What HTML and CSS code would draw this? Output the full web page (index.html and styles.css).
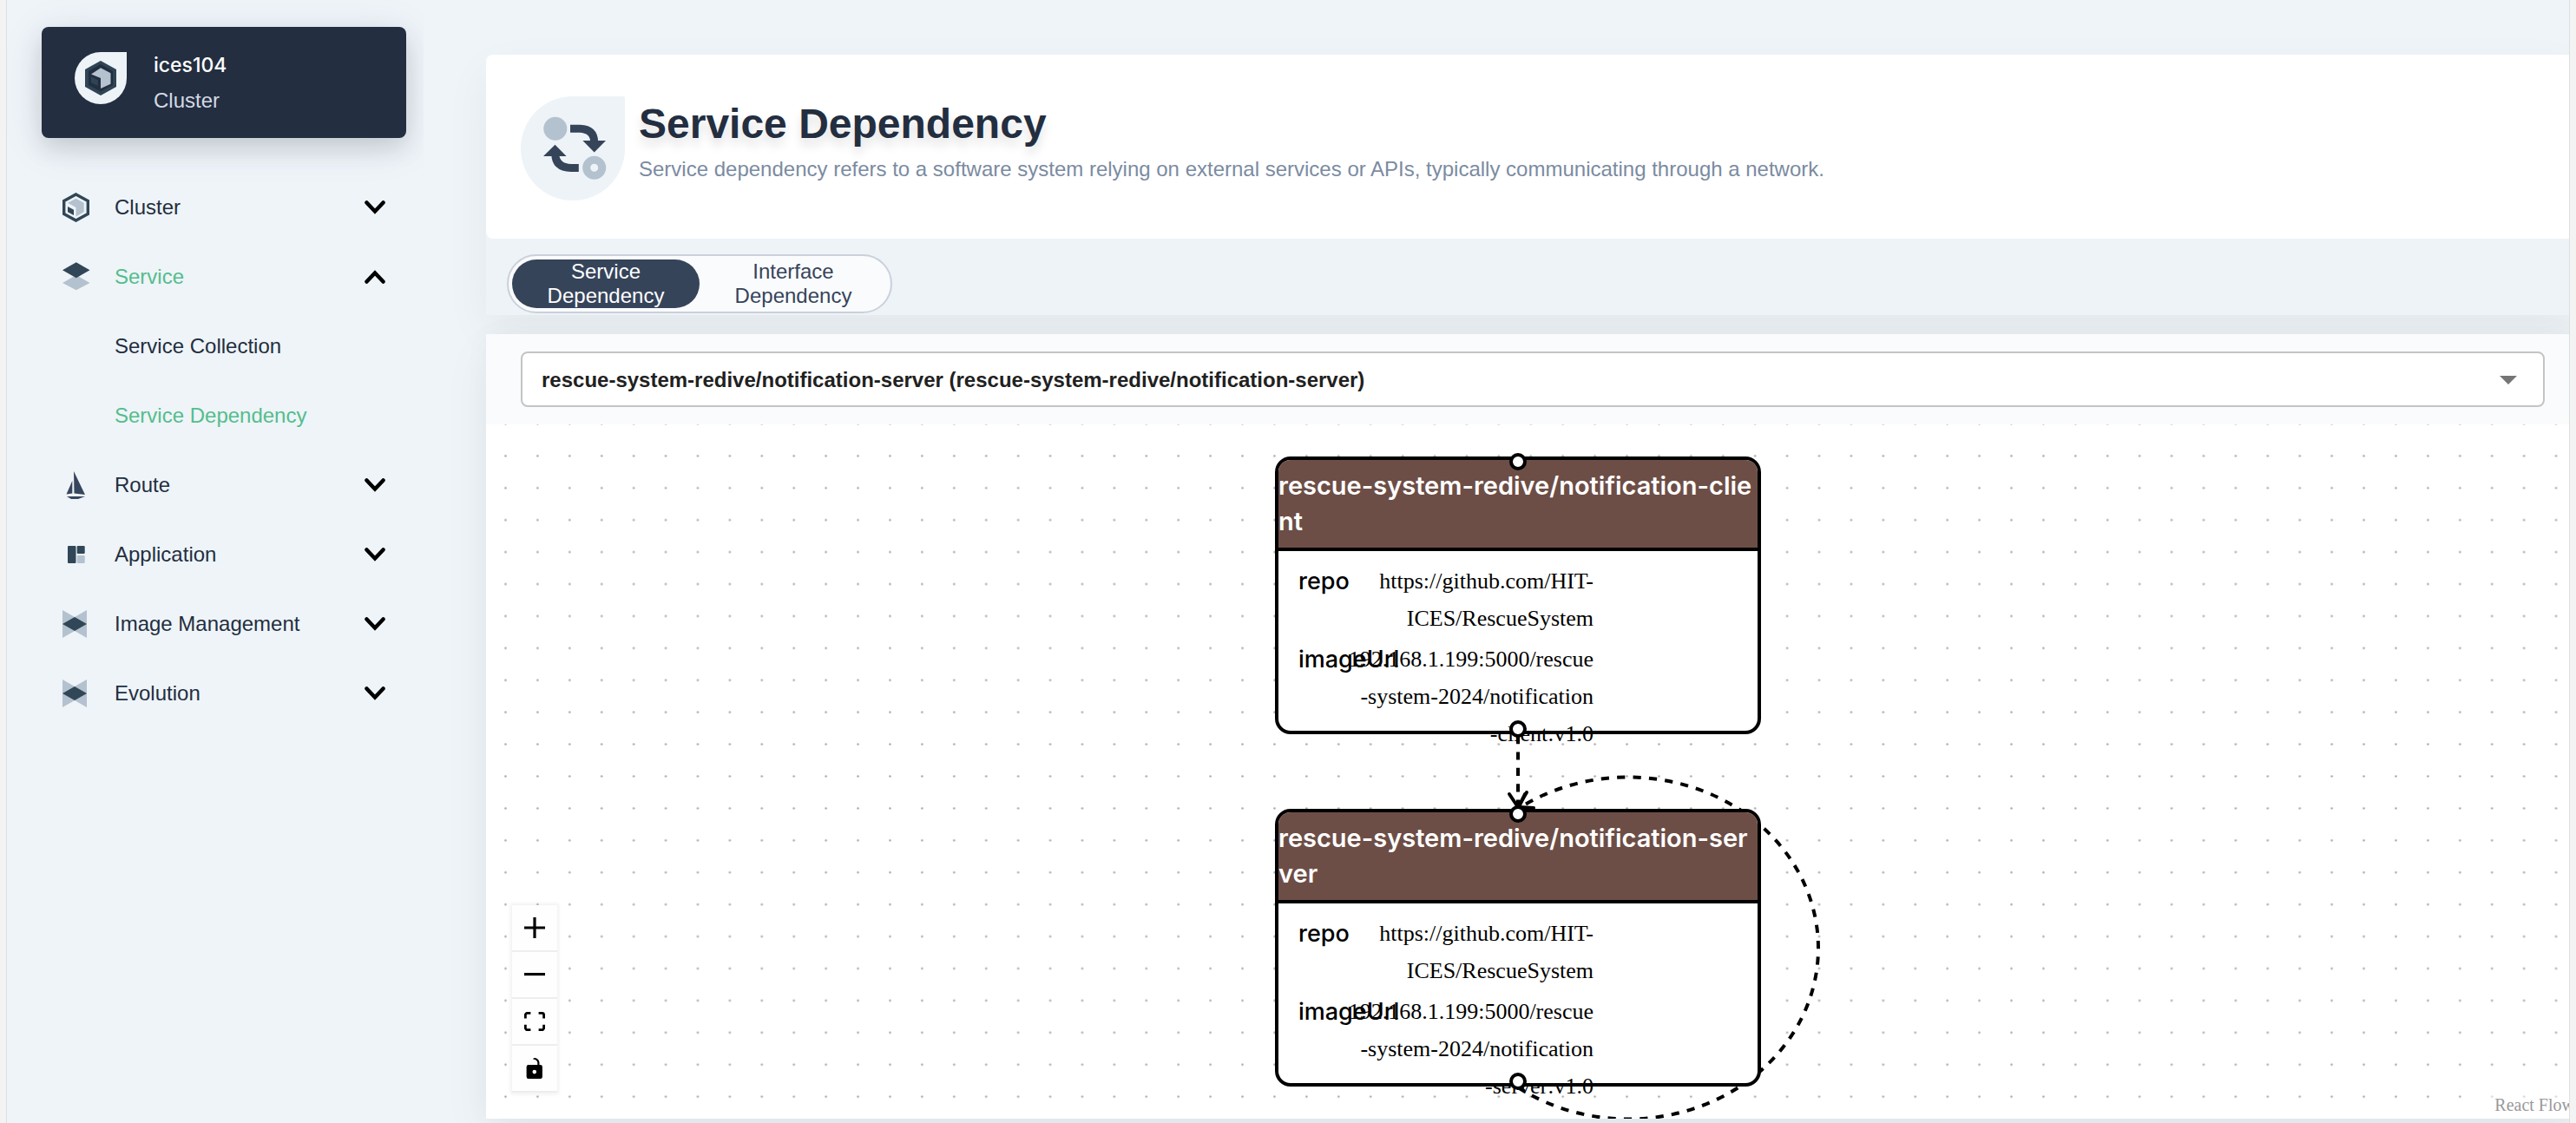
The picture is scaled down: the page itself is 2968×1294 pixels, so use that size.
FILE: index.html
```html
<!DOCTYPE html>
<html lang="en">
<head>
<meta charset="utf-8">
<meta name="viewport" content="width=device-width, initial-scale=1">
<title>Service Dependency</title>
<link rel="stylesheet" href="styles.css">
</head>
<body>
<svg class="sprite" aria-hidden="true">
  <symbol id="chevron" viewBox="0 0 24 16"><path d="M2.5 2.5 12 12.5 21.500 2.500" fill="none" stroke="#000" stroke-width="4.500" stroke-linecap="round"/></symbol>
  <symbol id="bowtie" viewBox="0 0 34 34"><path d="M0 1 14 9 28 1V33L14 25 0 33Z" fill="#b4c1ce"/><path d="M0 17 14 9 28 17 14 25Z" fill="#314656"/></symbol>
</svg>
<div class="app">
  <aside class="sidebar">
    <div class="cluster-card">
      <span class="drop drop-small">
        <svg width="36" height="40" viewBox="0 0 36 40" aria-hidden="true">
          <path d="M18 0 36 10V30L18 40 0 30V10Z" fill="#2f4454"/>
          <path d="M18 4 32 12V28L18 35.500 4 28V12Z" fill="#232e40"/>
          <path d="M7 15.500 18 8.300 29.500 14.300V26.700L18 32V20Z" fill="#b4c1ce"/>
          <path d="M7 18.300 14.900 22.300V29L7 25.300Z" fill="#2f4454"/>
        </svg>
      </span>
      <div class="cluster-text">
        <strong>ices104</strong>
        <span>Cluster</span>
      </div>
    </div>
    <nav class="menu" aria-label="Main">
      <button class="menu-item" type="button" aria-expanded="false">
        <svg class="menu-icon" viewBox="0 0 34 34" aria-hidden="true">
          <path d="M15.500 1.900 29.300 9.500V24.500L15.500 32.100 1.700 24.500V9.500Z" fill="none" stroke="#314656" stroke-width="3.400"/>
          <path d="M6 11.800 15.500 6.700 24.700 11.800V22.300L15.500 27.500V17Z" fill="#b4c1ce"/>
          <path d="M6 16 13 19.800V26L6 22.200Z" fill="#314656"/>
        </svg>
        <span class="menu-label">Cluster</span>
        <svg class="chevron" aria-hidden="true"><use href="#chevron"/></svg>
      </button>
      <button class="menu-item active" type="button" aria-expanded="true">
        <svg class="menu-icon" viewBox="0 0 34 34" aria-hidden="true">
          <path d="M0 24 15.800 15 31.500 24 15.800 32.300Z" fill="#b4c1ce"/>
          <path d="M0 9.300 15.800 .3 31.500 9.300 15.800 18.300Z" fill="#314656"/>
        </svg>
        <span class="menu-label">Service</span>
        <svg class="chevron up" aria-hidden="true"><use href="#chevron"/></svg>
      </button>
      <a class="menu-item sub" href="#collection">Service Collection</a>
      <a class="menu-item sub active" href="#dependency" aria-current="page">Service Dependency</a>
      <button class="menu-item" type="button" aria-expanded="false">
        <svg class="menu-icon" viewBox="0 0 34 34" aria-hidden="true">
          <path d="M13 1 26 28 13.500 26.600ZM11.300 12V26.600L4.500 27.600ZM5 30H26L18 33H10Z" fill="#36465d"/>
        </svg>
        <span class="menu-label">Route</span>
        <svg class="chevron" aria-hidden="true"><use href="#chevron"/></svg>
      </button>
      <button class="menu-item" type="button" aria-expanded="false">
        <svg class="menu-icon" viewBox="0 0 34 34" aria-hidden="true">
          <rect x="6" y="7" width="9.500" height="20" rx="1" fill="#314656"/>
          <rect x="16.700" y="7" width="9" height="9" rx="1" fill="#314656"/>
          <rect x="16.700" y="18" width="9" height="9" rx="1" fill="#b4c1ce"/>
        </svg>
        <span class="menu-label">Application</span>
        <svg class="chevron" aria-hidden="true"><use href="#chevron"/></svg>
      </button>
      <button class="menu-item" type="button" aria-expanded="false">
        <svg class="menu-icon" aria-hidden="true"><use href="#bowtie"/></svg>
        <span class="menu-label">Image Management</span>
        <svg class="chevron" aria-hidden="true"><use href="#chevron"/></svg>
      </button>
      <button class="menu-item" type="button" aria-expanded="false">
        <svg class="menu-icon" aria-hidden="true"><use href="#bowtie"/></svg>
        <span class="menu-label">Evolution</span>
        <svg class="chevron" aria-hidden="true"><use href="#chevron"/></svg>
      </button>
    </nav>
  </aside>

  <main class="main">
    <section class="top">
      <header class="page-header">
        <span class="drop drop-large">
          <svg width="120" height="120" viewBox="0 0 120 120" aria-hidden="true">
            <circle cx="39.800" cy="37.300" r="13.500" fill="#b4c1ce"/>
            <circle cx="84.700" cy="82.300" r="9" fill="none" stroke="#b4c1ce" stroke-width="9"/>
            <g fill="none" stroke="#36445a" stroke-width="9"><path d="M57 37.300H68Q84.700 38 84.700 53"/><path d="M66.800 82.500H58Q39.800 82 39.800 66"/></g>
            <path d="M71.400 51H98L84.700 64.500ZM26 69 39.500 55.700 52.600 69Z" fill="#36445a"/>
          </svg>
        </span>
        <div>
          <h1>Service Dependency</h1>
          <p>Service dependency refers to a software system relying on external services or APIs, typically communicating through a network.</p>
        </div>
      </header>
      <div class="tab-strip">
        <div class="tabs" role="tablist">
          <button class="tab selected" type="button" role="tab" aria-selected="true">Service Dependency</button>
          <button class="tab" type="button" role="tab" aria-selected="false">Interface Dependency</button>
        </div>
      </div>
    </section>

    <section class="graph-panel">
      <div class="picker">
        <select class="picker-select" aria-label="Service">
          <option>rescue-system-redive/notification-server (rescue-system-redive/notification-server)</option>
        </select>
        <svg class="picker-caret" viewBox="0 0 20 10" aria-hidden="true"><path d="M0 0H20L10 10Z" fill="#757575"/></svg>
      </div>
      <div class="flow">
        <svg class="flow-layer" aria-hidden="true">
          <defs>
            <pattern id="dots" x="4.050" y="17.900" width="36.915" height="36.915" patternUnits="userSpaceOnUse"><circle cx="18.450" cy="18.450" r="1.300" fill="#aaa"/></pattern>
          </defs>
          <rect width="100%" height="100%" fill="url(#dots)"/>
          <g fill="none" stroke="#000" stroke-width="4">
            <path d="M1189 359V441" stroke-dasharray="9.200"/>
            <path d="M1189 764A219 197 0 1 0 1189 443" stroke-dasharray="9.200"/>
            <path d="M1179 426 1189 441 1199 424" stroke-linecap="round"/>
            <path d="M1197 426 1190 441 1207 442" stroke-linecap="round"/>
          </g>
        </svg>
        <article class="node node-client">
          <i class="handle handle-top"></i>
          <h2>rescue-system-redive/notification-client</h2>
          <dl>
            <dt>repo</dt>
            <dd>https://github.com/HIT-<br>ICES/RescueSystem</dd>
            <dt>imageUrl</dt>
            <dd>192.168.1.199:5000/rescue<br>-system-2024/notification<br>-client:v1.0</dd>
          </dl>
          <i class="handle handle-bottom"></i>
        </article>
        <article class="node node-server">
          <i class="handle handle-top"></i>
          <h2>rescue-system-redive/notification-server</h2>
          <dl>
            <dt>repo</dt>
            <dd>https://github.com/HIT-<br>ICES/RescueSystem</dd>
            <dt>imageUrl</dt>
            <dd>192.168.1.199:5000/rescue<br>-system-2024/notification<br>-server:v1.0</dd>
          </dl>
          <i class="handle handle-bottom"></i>
        </article>
        <div class="controls">
          <button type="button" aria-label="Zoom in"><svg viewBox="0 0 32 32"><path d="M32 18.133H18.133V32h-4.266V18.133H0v-4.266h13.867V0h4.266v13.867H32z"/></svg></button>
          <button type="button" aria-label="Zoom out"><svg viewBox="0 0 32 5"><path d="M0 0h32v4.200H0z"/></svg></button>
          <button type="button" aria-label="Fit view"><svg viewBox="0 0 32 30"><path d="M3.692 4.630c0-.53.4-.938.939-.938h5.215V0H4.708C2.130 0 0 2.054 0 4.630v5.216h3.692V4.631zM27.354 0h-5.200v3.692h5.170c.53 0 .984.4.984.939v5.215H32V4.631A4.624 4.624 0 0027.354 0zm.954 24.830c0 .532-.4.940-.939.940h-5.215v3.768h5.215c2.577 0 4.631-2.130 4.631-4.707v-5.139h-3.692v5.139zm-23.677.940c-.531 0-.939-.4-.939-.940v-5.138H0v5.139c0 2.577 2.130 4.707 4.708 4.707h5.138V25.770H4.631z"/></svg></button>
          <button type="button" aria-label="Toggle interactivity"><svg viewBox="0 0 25 32"><path d="M21.333 10.667H19.810V7.619C19.810 3.429 16.380 0 12.190 0c-4.114 1.828-1.370 2.133.305 2.438 1.676.305 4.420 2.590 4.420 5.181v3.048H3.047A3.056 3.056 0 000 13.714v15.238A3.056 3.056 0 003.048 32h18.285a3.056 3.056 0 003.048-3.048V13.714a3.056 3.056 0 00-3.048-3.047zM12.190 24.533a3.056 3.056 0 01-3.047-3.047 3.056 3.056 0 013.047-3.048 3.056 3.056 0 013.048 3.048 3.056 3.056 0 01-3.048 3.047z"/></svg></button>
        </div>
        <a class="attribution" href="#reactflow">React Flow</a>
      </div>
    </section>
  </main>
</div>
</body>
</html>
```
FILE: styles.css
```css
* { box-sizing: border-box; }

body {
  margin: 0;
  padding: 0 7px;
  background: #f3f3f3;
  color: #232e40;
  font: 24px/28px "Liberation Sans", Arial, sans-serif;
}

button, select { font: inherit; color: inherit; cursor: pointer; }
a { color: inherit; text-decoration: none; }
h1, h2, p, dl, dd { margin: 0; }

.sprite { position: absolute; width: 0; height: 0; }

.app {
  display: flex;
  gap: 72px;
  min-height: 100vh;
  overflow: hidden;
  border: solid #dcdfe2;
  border-width: 0 1px;
  background: #eef4f8;
}

/* Sidebar */
.sidebar {
  flex: 0 0 480px;
  padding: 31px 20px 40px 40px;
  overflow: hidden;
}

.cluster-card {
  display: flex;
  gap: 31px;
  height: 128px;
  padding: 29px 38px;
  border-radius: 8px;
  background: #232e40;
  box-shadow: 0 12px 28px rgba(0, 0, 0, .12), 0 8px 50px rgba(50, 50, 93, .1);
}

.drop {
  display: grid;
  place-items: center;
  flex: none;
  border-radius: 50% 0 50% 50%;
  background: #edf3f7;
}
.drop-small { width: 60px; height: 60px; }
.drop-large { width: 120px; height: 120px; border-top-right-radius: 2px; }

.cluster-text {
  display: flex;
  flex-direction: column;
  gap: 13px;
  padding-top: 1px;
}
.cluster-text strong { color: #fff; font: 500 23px/28px Inter, sans-serif; }
.cluster-text span { color: #d3dae4; }

.menu {
  display: flex;
  flex-direction: column;
  padding: 40px 24px 0;
}
.menu-item {
  display: flex;
  align-items: center;
  gap: 26px;
  height: 80px;
  padding: 0;
  border: 0;
  background: none;
  text-align: left;
}
.menu-item.sub { padding-left: 60px; }
.menu-item.active { color: #55bd8c; }
.menu-icon { width: 34px; height: 34px; }
.menu-label { flex: 1; }
.chevron { width: 24px; height: 16px; }
.chevron.up { transform: scaleY(-1); }

/* Main column */
.main {
  display: flex;
  flex: 1;
  flex-direction: column;
  gap: 22px;
  min-width: 0;
  margin-right: -12px;
  padding: 63px 0 5px;
}

.top { box-shadow: 0 20px 54px rgba(0, 0, 0, .05); border-radius: 8px; }

.page-header {
  display: flex;
  gap: 16px;
  height: 212px;
  padding: 48px 40px;
  border-radius: 8px;
  background: #fff;
}
.page-header h1 {
  font-size: 48px;
  line-height: 64px;
  text-shadow: 0 8px 12px rgba(0, 0, 0, .12);
}
.page-header p { padding-top: 6px; color: #7b8ba1; }

.tab-strip { padding: 18px 24px 2px; background: #edf3f7; }
.tabs {
  display: inline-flex;
  padding: 4px;
  border: 2px solid #cad1db;
  border-radius: 34px;
  background: #fafbfd;
  vertical-align: top;
}
.tab {
  width: 216px;
  height: 56px;
  padding: 0 32px;
  border: 0;
  border-radius: 28px;
  background: none;
  color: #36445a;
}
.tab.selected { background: #36445a; color: #fff; }

.graph-panel {
  display: flex;
  flex: 1;
  flex-direction: column;
  background: #fafbfd;
  box-shadow: 0 20px 54px rgba(0, 0, 0, .05), 0 0 30px rgba(0, 0, 0, .03);
}

.picker { position: relative; padding: 20px 40px; }
.picker-select {
  display: block;
  width: 100%;
  height: 64px;
  padding: 2px 24px 0 22px;
  border: 2px solid #c4c4c4;
  border-radius: 8px;
  background: #fff;
  color: #212121;
  font-weight: bold;
  appearance: none;
}
.picker-caret {
  position: absolute;
  top: 48px;
  right: 72px;
  width: 20px;
  height: 10px;
  pointer-events: none;
}

/* Graph canvas */
.flow {
  position: relative;
  flex: 1;
  min-height: 800px;
  overflow: hidden;
  background: #fff;
}
.flow-layer { position: absolute; width: 100%; height: 100%; }

.node {
  position: absolute;
  left: 909px;
  width: 560px;
  height: 320px;
  border: 4px solid #000;
  border-radius: 18px;
  background: #fff;
  color: #000;
}
.node-client { top: 37px; }
.node-server { top: 443px; }

.node h2 {
  height: 105px;
  padding-top: 9px;
  border-bottom: 4px solid #000;
  border-radius: 14px 14px 0 0;
  background: #6d4e46;
  color: #fff;
  font: 600 29px/41px Inter, sans-serif;
  word-break: break-all;
}
.node dl {
  display: grid;
  grid-template-columns: 50px 290px;
  row-gap: 4px;
  padding: 13px 23px 0;
  line-height: 43px;
}
.node dt { font-family: Inter, sans-serif; font-size: 27px; font-weight: 500; }
.node dd {
  font-family: "Liberation Serif", serif;
  font-size: 26px;
  text-align: right;
}

.handle {
  position: absolute;
  left: 266px;
  width: 20px;
  height: 20px;
  border: 4px solid #000;
  border-radius: 50%;
  background: #fff;
}
.handle-top { top: -8px; }
.handle-bottom { bottom: -8px; }

.controls {
  position: absolute;
  bottom: 30px;
  left: 30px;
  box-shadow: 0 0 4px 2px rgba(0, 0, 0, .06);
}
.controls button {
  display: grid;
  place-items: center;
  width: 52px;
  height: 54px;
  padding: 0;
  border: 0;
  border-bottom: 2px solid #eee;
  background: #fefefe;
}
.controls svg { width: 24px; max-height: 24px; }

.attribution {
  position: absolute;
  right: 0;
  bottom: 0;
  padding: 4px 6px;
  background: rgba(255, 255, 255, .5);
  color: #999;
  font: 20px/24px "Liberation Serif", serif;
}
```
